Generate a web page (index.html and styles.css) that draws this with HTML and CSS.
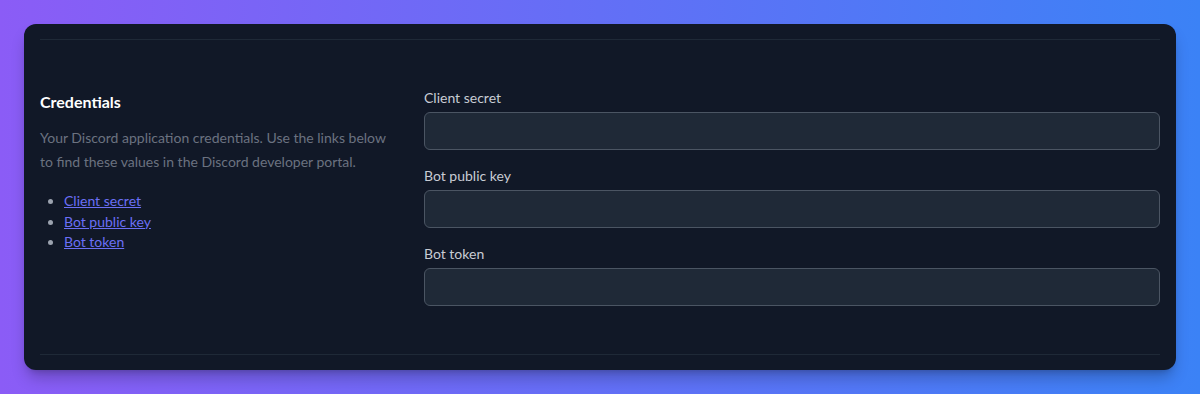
FILE: index.html
```html
<!DOCTYPE html>
<html lang="en">
<head>
<meta charset="utf-8">
<title>Credentials</title>
<link rel="stylesheet" href="styles.css">
</head>
<body>
<div class="page">
  <div class="card">
    <section class="section">
      <div class="intro">
        <h2 class="title">Credentials</h2>
        <p class="desc">Your Discord application credentials. Use the links below to find these values in the Discord developer portal.</p>
        <ul class="links">
          <li><a href="#">Client secret</a></li>
          <li><a href="#">Bot public key</a></li>
          <li><a href="#">Bot token</a></li>
        </ul>
      </div>
      <div class="fields">
        <div class="field">
          <label class="label" for="cs">Client secret</label>
          <input class="input" id="cs" type="text">
        </div>
        <div class="field">
          <label class="label" for="pk">Bot public key</label>
          <input class="input" id="pk" type="text">
        </div>
        <div class="field">
          <label class="label" for="bt">Bot token</label>
          <input class="input" id="bt" type="text">
        </div>
      </div>
    </section>
  </div>
</div>
</body>
</html>
```
FILE: styles.css
```css
* { box-sizing: border-box; }
html, body { margin: 0; padding: 0; }
body {
  font-family: "Lato", "Noto Sans", sans-serif;
  background: linear-gradient(to right, #8b5cf6, #3b82f6);
  width: 1200px;
  height: 394px;
  overflow: hidden;
}
.page { padding: 24px; }
.card {
  background: #111827;
  border-radius: 12px;
  padding: 15px 16px 15px;
  box-shadow: 0 10px 15px -3px rgba(0,0,0,0.25), 0 4px 6px -4px rgba(0,0,0,0.2);
}
.section {
  border-top: 1px solid #1f2937;
  border-bottom: 1px solid #1f2937;
  padding: 48px 0;
  display: grid;
  grid-template-columns: repeat(3, 1fr);
  column-gap: 32px;
}
.intro { grid-column: 1; }
.title {
  margin: 0;
  font-size: 16px;
  line-height: 28px;
  font-weight: 700;
  color: #ffffff;
}
.desc {
  margin: 10px 0 0;
  font-size: 14px;
  line-height: 24px;
  color: #6b7280;
}
.links {
  margin: 17px 0 0;
  padding-left: 24px;
  font-size: 14px;
  line-height: 20.5px;
  color: #9ca3af;
}
.links a { color: #6b6ff5; text-decoration: underline; }
.fields {
  grid-column: 2 / span 2;
  display: flex;
  flex-direction: column;
  gap: 16px;
}
.field { display: flex; flex-direction: column; gap: 4px; }
.label {
  font-size: 14px;
  line-height: 20px;
  font-weight: 400;
  color: #c8ccd4;
}
.input {
  height: 38px;
  width: 100%;
  background: #1f2937;
  border: 1px solid #4b5563;
  border-radius: 6px;
  color: #fff;
  font: inherit;
}
```
